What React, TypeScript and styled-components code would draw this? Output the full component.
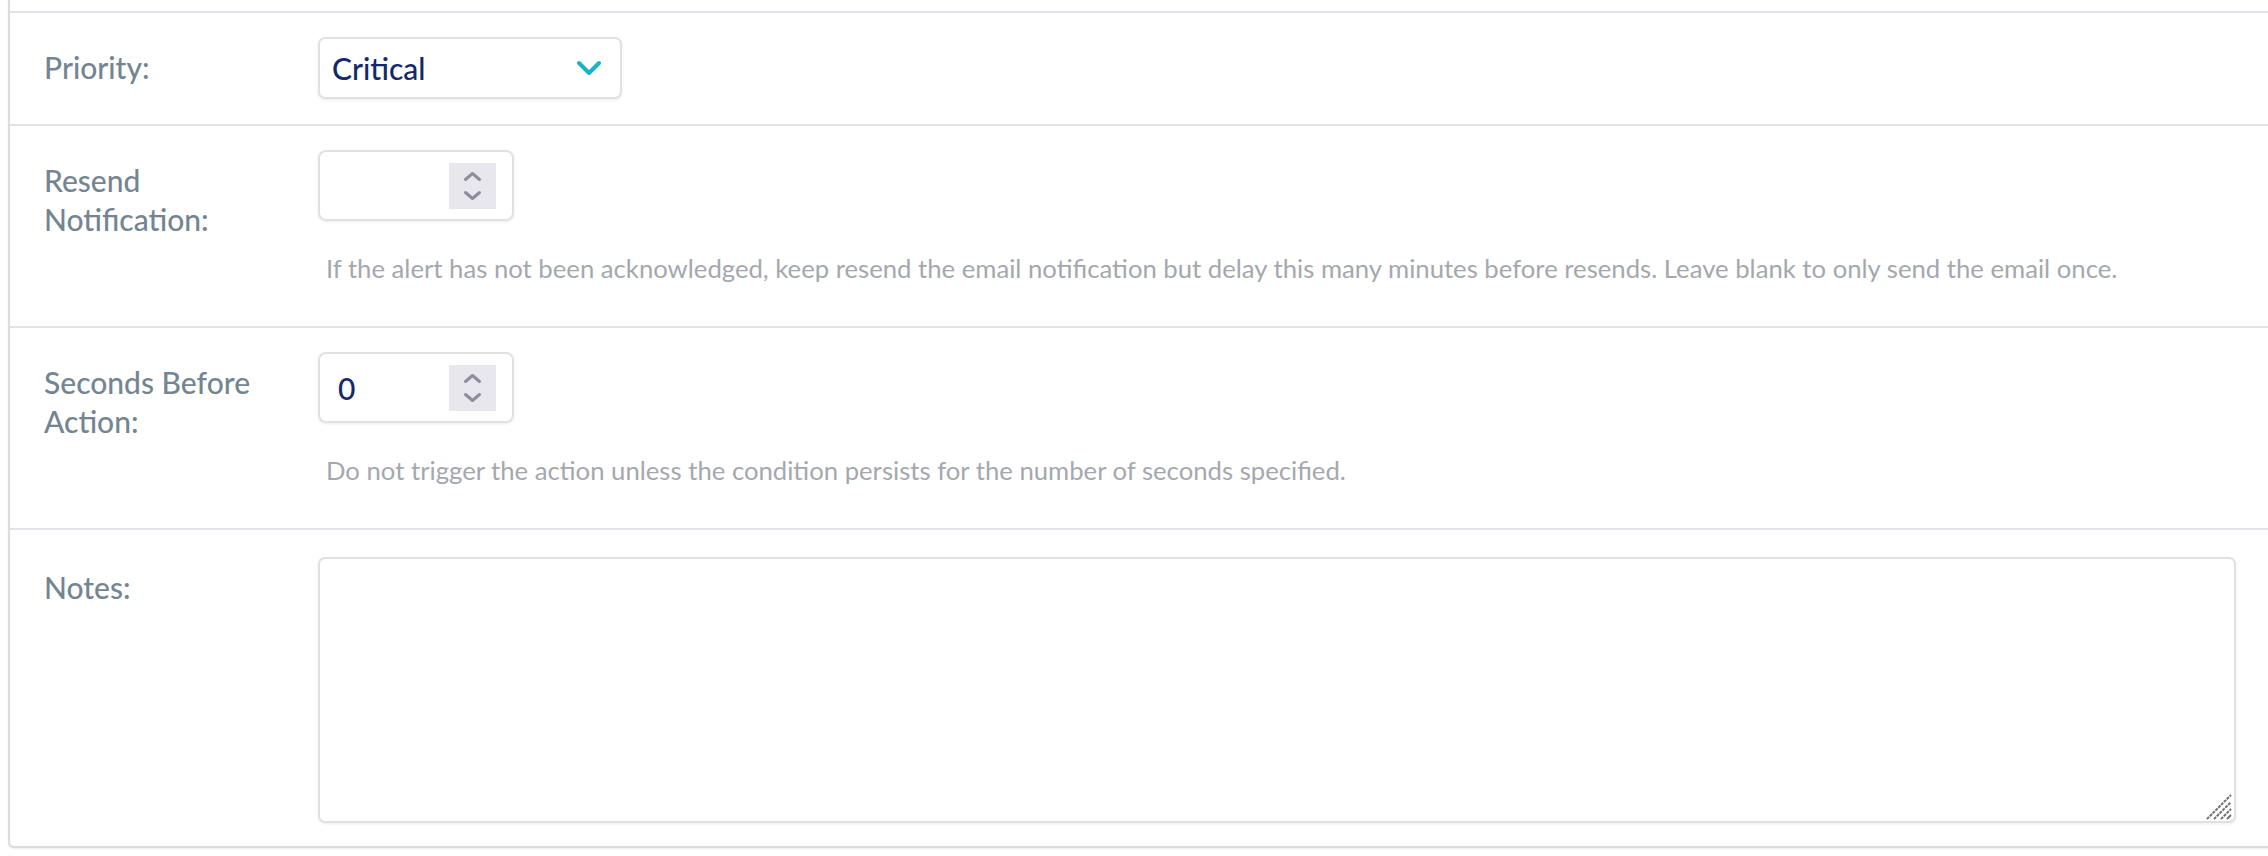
import styled, { createGlobalStyle } from 'styled-components';

const GlobalStyle = createGlobalStyle`
  html, body {
    margin: 0;
    padding: 0;
    background: #ffffff;
  }
  body {
    font-family: Lato, "Open Sans", sans-serif;
    overflow: hidden;
  }
`;

const ChevronDown = ({ color, width, height, stroke }: { color: string; width: number; height: number; stroke: number }) => (
  <svg width={width} height={height} viewBox={`0 0 ${width} ${height}`} fill="none">
    <path
      d={`M${stroke / 2 + 1} ${stroke / 2 + 1} L${width / 2} ${height - stroke / 2 - 1} L${width - stroke / 2 - 1} ${stroke / 2 + 1}`}
      stroke={color}
      strokeWidth={stroke}
      strokeLinecap="round"
      strokeLinejoin="round"
    />
  </svg>
);

const ChevronUp = ({ color, width, height, stroke }: { color: string; width: number; height: number; stroke: number }) => (
  <svg width={width} height={height} viewBox={`0 0 ${width} ${height}`} fill="none">
    <path
      d={`M${stroke / 2 + 1} ${height - stroke / 2 - 1} L${width / 2} ${stroke / 2 + 1} L${width - stroke / 2 - 1} ${height - stroke / 2 - 1}`}
      stroke={color}
      strokeWidth={stroke}
      strokeLinecap="round"
      strokeLinejoin="round"
    />
  </svg>
);

const NumberField = ({ value }: { value?: string }) => (
  <NumberBox>
    <NumberValue>{value}</NumberValue>
    <Spinner>
      <ChevronUp color="#8e8d99" width={19} height={11} stroke={3} />
      <ChevronDown color="#8e8d99" width={19} height={11} stroke={3} />
    </Spinner>
  </NumberBox>
);

const App = () => {
  return (
    <>
      <GlobalStyle />
      <Viewport>
        <Panel>
          <TopSpacer />
          <Row>
            <Label>Priority:</Label>
            <Field>
              <Select>
                <SelectValue>Critical</SelectValue>
                <ChevronDown color="#1ab2c9" width={26} height={16} stroke={4} />
              </Select>
            </Field>
          </Row>

          <Row $withHelp>
            <Label>
              Resend
              <br />
              Notification:
            </Label>
            <Field>
              <NumberField />
              <Help>
                If the alert has not been acknowledged, keep resend the email notification but delay this many
                minutes before resends. Leave blank to only send the email once.
              </Help>
            </Field>
          </Row>

          <Row $withHelp>
            <Label>
              Seconds Before
              <br />
              Action:
            </Label>
            <Field>
              <NumberField value="0" />
              <Help>Do not trigger the action unless the condition persists for the number of seconds specified.</Help>
            </Field>
          </Row>

          <Row $last>
            <Label>Notes:</Label>
            <Field>
              <TextareaWrap>
                <Notes />
                <ResizeGrip width="26" height="26" viewBox="0 0 26 26">
                  <path d="M1 25 L25 1" stroke="#707070" strokeWidth="2" strokeDasharray="3 1" />
                  <path d="M8 25 L25 8" stroke="#707070" strokeWidth="2" strokeDasharray="3 1" />
                  <path d="M15 25 L25 15" stroke="#707070" strokeWidth="2" strokeDasharray="3 1" />
                  <path d="M21 25 L25 21" stroke="#707070" strokeWidth="2" />
                </ResizeGrip>
              </TextareaWrap>
            </Field>
          </Row>
        </Panel>
      </Viewport>
    </>
  );
};

export default App;

const Viewport = styled.div`
  width: 2268px;
  height: 856px;
  overflow: hidden;
`;

const Panel = styled.div`
  width: 2320px;
  margin-left: 8px;
  box-sizing: border-box;
  border: 2px solid #dcdcdc;
  border-top: none;
  border-radius: 0 0 0 6px;
  box-shadow: 0 1px 2px rgba(0, 0, 0, 0.08);
  background: #ffffff;
`;

const TopSpacer = styled.div`
  height: 11px;
`;

const Row = styled.div<{ $withHelp?: boolean; $last?: boolean }>`
  display: grid;
  grid-template-columns: 308px 1fr;
  border-top: 2px solid #e0e4e8;
  padding: ${(p) => (p.$last ? '27px' : '24px')} 0 ${(p) => (p.$last ? '23px' : p.$withHelp ? '26px' : '25px')} 0;
  padding-right: ${(p) => (p.$last ? '84px' : '0')};
`;

const Label = styled.div`
  padding-left: 34px;
  margin-top: 11px;
  font-size: 30px;
  font-weight: 500;
  line-height: 39px;
  color: #748591;
`;

const Field = styled.div`
  display: flex;
  flex-direction: column;
  align-items: flex-start;
`;

const Select = styled.div`
  width: 304px;
  height: 62px;
  box-sizing: border-box;
  border: 2px solid #e1e1e1;
  border-radius: 7px;
  box-shadow: 0 1px 3px rgba(0, 0, 0, 0.08);
  display: flex;
  align-items: center;
  justify-content: space-between;
  padding: 0 18px 0 12px;
`;

const SelectValue = styled.span`
  font-size: 30px;
  font-weight: 500;
  color: #13296a;
`;

const NumberBox = styled.div`
  width: 196px;
  height: 71px;
  box-sizing: border-box;
  border: 2px solid #e1e1e1;
  border-radius: 8px;
  box-shadow: 0 1px 3px rgba(0, 0, 0, 0.08);
  display: flex;
  align-items: center;
  justify-content: space-between;
  padding: 0 16px 0 18px;
`;

const NumberValue = styled.span`
  font-size: 30px;
  font-weight: 500;
  color: #13296a;
`;

const Spinner = styled.div`
  width: 47px;
  height: 46px;
  background: #e8e7ed;
  display: flex;
  flex-direction: column;
  align-items: center;
  justify-content: center;
  gap: 8px;
`;

const Help = styled.div`
  margin-top: 31px;
  margin-bottom: 16px;
  padding-left: 8px;
  font-size: 25.7px;
  line-height: 32px;
  color: #a4a8ae;
`;

const TextareaWrap = styled.div`
  position: relative;
  width: 100%;
  max-width: 1918px;
`;

const Notes = styled.textarea`
  display: block;
  width: 1918px;
  height: 266px;
  box-sizing: border-box;
  border: 2px solid #e1e1e1;
  border-radius: 7px;
  box-shadow: 0 1px 3px rgba(0, 0, 0, 0.08);
  resize: none;
  outline: none;
  font-family: Lato, sans-serif;
  font-size: 24px;
  padding: 12px 16px;
`;

const ResizeGrip = styled.svg`
  position: absolute;
  right: 4px;
  bottom: 3px;
  pointer-events: none;
`;
